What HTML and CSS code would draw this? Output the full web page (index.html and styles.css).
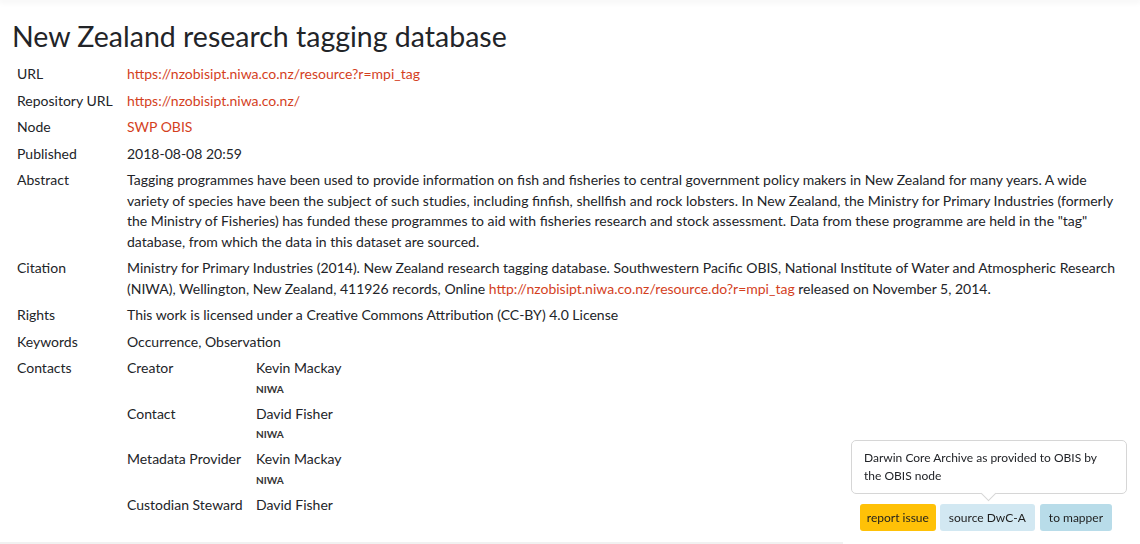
FILE: index.html
```html
<!DOCTYPE html>
<html lang="en">
<head>
  <meta charset="UTF-8">
  <title>New Zealand research tagging database</title>
  <link rel="stylesheet" href="styles.css">
</head>
<body>

  <div class="topbar"></div>

  <div class="container">
    <h1>New Zealand research tagging database</h1>

    <table class="meta">
      <tr>
        <th>URL</th>
        <td><a href="#">https://nzobisipt.niwa.co.nz/resource?r=mpi_tag</a></td>
      </tr>
      <tr>
        <th>Repository URL</th>
        <td><a href="#">https://nzobisipt.niwa.co.nz/</a></td>
      </tr>
      <tr>
        <th>Node</th>
        <td><a href="#">SWP OBIS</a></td>
      </tr>
      <tr>
        <th>Published</th>
        <td>2018-08-08 20:59</td>
      </tr>
      <tr>
        <th>Abstract</th>
        <td>Tagging programmes have been used to provide information on fish and fisheries to central government policy makers in New Zealand for many years. A wide variety of species have been the subject of such studies, including finfish, shellfish and rock lobsters. In New Zealand, the Ministry for Primary Industries (formerly the Ministry of Fisheries) has funded these programmes to aid with fisheries research and stock assessment. Data from these programme are held in the "tag" database, from which the data in this dataset are sourced.</td>
      </tr>
      <tr>
        <th>Citation</th>
        <td>Ministry for Primary Industries (2014). New Zealand research tagging database. Southwestern Pacific OBIS, National Institute of Water and Atmospheric Research (NIWA), Wellington, New Zealand, 411926 records, Online <a href="#">http://nzobisipt.niwa.co.nz/resource.do?r=mpi_tag</a> released on November 5, 2014.</td>
      </tr>
      <tr>
        <th>Rights</th>
        <td>This work is licensed under a Creative Commons Attribution (CC-BY) 4.0 License</td>
      </tr>
      <tr>
        <th>Keywords</th>
        <td>Occurrence, Observation</td>
      </tr>
      <tr>
        <th>Contacts</th>
        <td>
          <table class="contacts">
            <tr>
              <td class="role">Creator</td>
              <td><div>Kevin Mackay</div><div class="org">NIWA</div></td>
            </tr>
            <tr>
              <td class="role">Contact</td>
              <td><div>David Fisher</div><div class="org">NIWA</div></td>
            </tr>
            <tr>
              <td class="role">Metadata Provider</td>
              <td><div>Kevin Mackay</div><div class="org">NIWA</div></td>
            </tr>
            <tr>
              <td class="role">Custodian Steward</td>
              <td><div>David Fisher</div></td>
            </tr>
          </table>
        </td>
      </tr>
    </table>
  </div>

  <div class="footer-line"></div>

  <div class="actions">
    <div class="tooltip">Darwin Core Archive as provided to OBIS by the OBIS node</div>
    <a class="btn btn-warning" href="#">report issue</a>
    <a class="btn btn-source" href="#">source DwC-A</a>
    <a class="btn btn-mapper" href="#">to mapper</a>
  </div>

</body>
</html>
```

FILE: styles.css
```css
body {
  margin: 0;
  background-color: #ffffff;
  font-family: Lato, "Open Sans", sans-serif;
  font-size: 14px;
  line-height: 20.4px;
  color: #222428;
}

a {
  color: #d43f1e;
  text-decoration: none;
}

.topbar {
  height: 0;
  box-shadow: 0 0 6px 2px rgba(0,0,0,0.06);
}

.container {
  padding: 0 12px;
  height: 542px;
}

h1 {
  margin: 0;
  padding-top: 19px;
  padding-bottom: 8px;
  font-size: 28.5px;
  font-weight: 400;
  line-height: 34px;
}

.meta {
  border-collapse: collapse;
  width: 100%;
}

.meta th,
.meta td {
  padding: 3.1px 5px;
  vertical-align: top;
  text-align: left;
  font-weight: 400;
}

.meta th {
  width: 100px;
  white-space: nowrap;
}

.contacts {
  border-collapse: collapse;
}

.contacts td {
  padding: 0 0 5px 0;
  vertical-align: top;
}

.contacts .role {
  width: 129px;
}

.org {
  font-size: 10px;
  font-weight: 700;
  line-height: 20px;
  color: #333;
}

.footer-line {
  width: 843px;
  border-top: 2px solid #f1f1f1;
}

.actions {
  position: fixed;
  right: 28px;
  bottom: 13px;
  display: flex;
  gap: 4px;
}

.btn {
  display: block;
  padding: 0 9px;
  height: 27px;
  line-height: 27px;
  font-size: 12px;
  color: #1e1e1e;
  border-radius: 3px;
  white-space: nowrap;
}

.btn-warning {
  background-color: #ffc107;
  padding: 0 7px;
}

.btn-source {
  background-color: #d2e8f2;
}

.btn-mapper {
  background-color: #b8dce9;
  margin-left: 1px;
}

.tooltip {
  position: absolute;
  right: -15px;
  bottom: 37px;
  width: 250px;
  padding: 8px 12px;
  background: #fff;
  border: 1px solid #d6d6d6;
  border-radius: 5px;
  font-size: 12px;
  line-height: 18px;
}

.tooltip::after {
  content: "";
  position: absolute;
  left: 131px;
  bottom: -6px;
  width: 10px;
  height: 10px;
  background: #fff;
  border-right: 1px solid #d6d6d6;
  border-bottom: 1px solid #d6d6d6;
  transform: rotate(45deg);
}
```
